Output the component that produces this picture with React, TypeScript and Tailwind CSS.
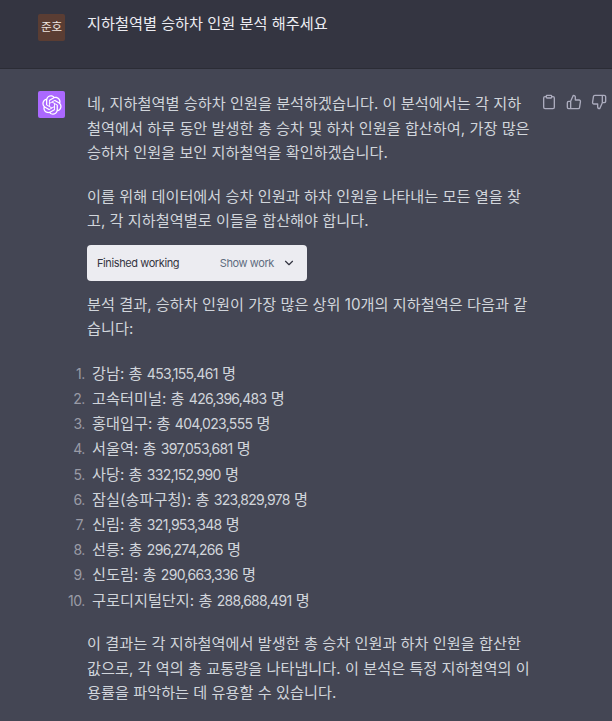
import React from "react";
import { ChevronDown } from "lucide-react";

const stations = [
  { name: "강남", count: "453,155,461" },
  { name: "고속터미널", count: "426,396,483" },
  { name: "홍대입구", count: "404,023,555" },
  { name: "서울역", count: "397,053,681" },
  { name: "사당", count: "332,152,990" },
  { name: "잠실(송파구청)", count: "323,829,978" },
  { name: "신림", count: "321,953,348" },
  { name: "선릉", count: "296,274,266" },
  { name: "신도림", count: "290,663,336" },
  { name: "구로디지털단지", count: "288,688,491" },
];

const GptLogo = () => (
  <svg viewBox="0 0 41 41" width="20" height="20" fill="none">
    <path
      d="M37.5324 16.8707C37.9808 15.5241 38.1363 14.0974 37.9886 12.6859C37.8409 11.2744 37.3934 9.91076 36.676 8.68622C35.6126 6.83404 33.9882 5.3676 32.0373 4.4985C30.0864 3.62941 27.9098 3.40259 25.8215 3.85078C24.8796 2.7893 23.7219 1.94125 22.4257 1.36341C21.1295 0.785575 19.7249 0.491269 18.3058 0.500197C16.1708 0.495044 14.0893 1.16803 12.3614 2.42214C10.6335 3.67624 9.34853 5.44666 8.6917 7.47815C7.30085 7.76286 5.98686 8.3414 4.8377 9.17505C3.68854 10.0087 2.73073 11.0782 2.02839 12.312C0.956464 14.1591 0.498905 16.2988 0.721698 18.4228C0.944492 20.5467 1.83612 22.5449 3.268 24.1293C2.81966 25.4759 2.66413 26.9026 2.81182 28.3141C2.95951 29.7256 3.40701 31.0892 4.12437 32.3138C5.18791 34.1659 6.8123 35.6322 8.76321 36.5013C10.7141 37.3704 12.8907 37.5973 14.9789 37.1492C15.9208 38.2107 17.0786 39.0587 18.3747 39.6366C19.6709 40.2144 21.0755 40.5087 22.4946 40.4998C24.6307 40.5054 26.7133 39.8321 28.4418 38.5772C30.1704 37.3223 31.4556 35.5506 32.1119 33.5179C33.5027 33.2332 34.8167 32.6547 35.9659 31.821C37.115 30.9874 38.0728 29.9178 38.7752 28.684C39.8458 26.8371 40.3023 24.6979 40.0789 22.5748C39.8556 20.4517 38.9639 18.4544 37.5324 16.8707ZM22.4978 37.8849C20.7443 37.8874 19.0459 37.2733 17.6994 36.1501C17.7601 36.117 17.8666 36.0586 17.936 36.0161L25.9004 31.4156C26.1003 31.3019 26.2663 31.137 26.3813 30.9378C26.4964 30.7386 26.5563 30.5124 26.5549 30.2825V19.0542L29.9213 20.998C29.9389 21.0068 29.9541 21.0198 29.9656 21.0359C29.977 21.052 29.9842 21.0707 29.9867 21.0902V30.3889C29.9842 32.375 29.1946 34.2791 27.7909 35.6841C26.3872 37.0892 24.4838 37.8806 22.4978 37.8849ZM6.39227 31.0064C5.51397 29.4888 5.19742 27.7107 5.49804 25.9832C5.55718 26.0187 5.66048 26.0818 5.73461 26.1244L13.699 30.7248C13.8975 30.8408 14.1233 30.902 14.3532 30.902C14.583 30.902 14.8088 30.8408 15.0073 30.7248L24.731 25.1103V28.9979C24.7321 29.0177 24.7283 29.0376 24.7199 29.0556C24.7115 29.0736 24.6988 29.0893 24.6829 29.1012L16.6317 33.7497C14.9096 34.7416 12.8643 35.0097 10.9447 34.4954C9.02506 33.9811 7.38785 32.7263 6.39227 31.0064ZM4.29707 13.6194C5.17156 12.0998 6.55279 10.9364 8.19885 10.3327C8.19885 10.4013 8.19491 10.5228 8.19491 10.6071V19.808C8.19351 20.0378 8.25334 20.2638 8.36823 20.4629C8.48312 20.6619 8.64893 20.8267 8.84863 20.9404L18.5723 26.5542L15.206 28.4979C15.1894 28.5089 15.1703 28.5155 15.1505 28.5173C15.1307 28.5191 15.1107 28.516 15.0924 28.5082L7.04046 23.8557C5.32135 22.8601 4.06716 21.2235 3.55289 19.3046C3.03862 17.3858 3.30624 15.3413 4.29707 13.6194ZM31.955 20.0556L22.2312 14.4411L25.5976 12.4981C25.6142 12.4872 25.6333 12.4805 25.6531 12.4787C25.6729 12.4769 25.6928 12.4801 25.7111 12.4879L33.7631 17.1364C34.9967 17.849 36.0017 18.8982 36.6606 20.1613C37.3194 21.4244 37.6047 22.849 37.4832 24.2684C37.3617 25.6878 36.8382 27.0432 35.9743 28.1759C35.1103 29.3086 33.9415 30.1717 32.6047 30.6641C32.6047 30.5947 32.6047 30.4733 32.6047 30.3889V21.188C32.6066 20.9586 32.5474 20.7328 32.4332 20.5338C32.319 20.3348 32.154 20.1698 31.955 20.0556ZM35.3055 15.0128C35.2464 14.9765 35.1431 14.9142 35.069 14.8717L27.1045 10.2712C26.906 10.1554 26.6803 10.0943 26.4504 10.0943C26.2206 10.0943 25.9948 10.1554 25.7963 10.2712L16.0726 15.8858V11.9982C16.0715 11.9783 16.0753 11.9585 16.0837 11.9405C16.0921 11.9225 16.1048 11.9068 16.1207 11.8949L24.1719 7.25025C25.4053 6.53903 26.8158 6.19376 28.2383 6.25482C29.6608 6.31589 31.0364 6.78077 32.2044 7.59508C33.3723 8.40939 34.2842 9.53945 34.8334 10.8531C35.3826 12.1667 35.5464 13.6095 35.3055 15.0128ZM14.2424 21.9419L10.8752 19.9981C10.8576 19.9893 10.8423 19.9763 10.8309 19.9602C10.8195 19.9441 10.8122 19.9254 10.8098 19.9058V10.6071C10.8107 9.18295 11.2173 7.78848 11.9819 6.58696C12.7466 5.38544 13.8377 4.42659 15.1275 3.82264C16.4173 3.21869 17.8524 2.99464 19.2649 3.1767C20.6775 3.35876 22.0089 3.93941 23.1034 4.85067C23.0427 4.88379 22.937 4.94215 22.8668 4.98473L14.9024 9.58517C14.7025 9.69878 14.5366 9.86356 14.4215 10.0626C14.3065 10.2616 14.2466 10.4877 14.2479 10.7175L14.2424 21.9419ZM16.071 17.9991L20.4018 15.4978L24.7325 17.9975V22.9985L20.4018 25.4983L16.071 22.9985V17.9991Z"
      fill="#fff"
    />
  </svg>
);

const ClipboardIcon = () => (
  <svg viewBox="0 0 24 24" width="16" height="16" fill="none" stroke="currentColor" strokeWidth="2" strokeLinecap="round" strokeLinejoin="round">
    <path d="M16 4h2a2 2 0 0 1 2 2v14a2 2 0 0 1-2 2H6a2 2 0 0 1-2-2V6a2 2 0 0 1 2-2h2" />
    <rect x="8" y="2" width="8" height="4" rx="1" ry="1" />
  </svg>
);

const ThumbUpIcon = () => (
  <svg viewBox="0 0 24 24" width="16" height="16" fill="none" stroke="currentColor" strokeWidth="2" strokeLinecap="round" strokeLinejoin="round">
    <path d="M14 9V5a3 3 0 0 0-3-3l-4 9v11h11.28a2 2 0 0 0 2-1.7l1.38-9a2 2 0 0 0-2-2.3zM7 22H4a2 2 0 0 1-2-2v-7a2 2 0 0 1 2-2h3" />
  </svg>
);

const ThumbDownIcon = () => (
  <svg viewBox="0 0 24 24" width="16" height="16" fill="none" stroke="currentColor" strokeWidth="2" strokeLinecap="round" strokeLinejoin="round">
    <path d="M10 15v4a3 3 0 0 0 3 3l4-9V2H5.72a2 2 0 0 0-2 1.7l-1.38 9a2 2 0 0 0 2 2.3zm7-13h2.67A2.31 2.31 0 0 1 22 4v7a2.31 2.31 0 0 1-2.33 2H17" />
  </svg>
);

const App = () => {
  return (
    <div className="w-[612px] h-[721px] overflow-hidden bg-[#444654] font-['Inter','Noto_Sans_CJK_KR',sans-serif] text-[15.2px] leading-[24.5px]">
      <div className="flex h-[69px] bg-[#343541] border-b border-[#2b2c35] pl-[38px] pt-[12px]">
        <div className="flex items-center justify-center w-[27px] h-[27px] mt-[2px] rounded-[2px] bg-[#5a3d33] text-[11.5px] text-[#f0e6e0]">
          준호
        </div>
        <div className="ml-[22px] text-[#ececf1]">지하철역별 승하차 인원 분석 해주세요</div>
      </div>
      <div className="relative flex pl-[38px] pt-[23px]">
        <div className="flex items-center justify-center w-[27px] h-[27px] -mt-[1px] rounded-[2px] bg-[#ab68ff]">
          <GptLogo />
        </div>
        <div className="ml-[22px] w-[445px] text-[#d1d5db]">
          <p className="mb-[19px]">
            네, 지하철역별 승하차 인원을 분석하겠습니다. 이 분석에서는 각 지하철역에서 하루 동안 발생한 총 승차 및 하차 인원을 합산하여, 가장 많은 승하차 인원을 보인 지하철역을 확인하겠습니다.
          </p>
          <p>이를 위해 데이터에서 승차 인원과 하차 인원을 나타내는 모든 열을 찾고, 각 지하철역별로 이들을 합산해야 합니다.</p>
          <div className="flex items-center justify-between w-[220px] h-[36px] mt-[11px] mb-[12px] pl-[10px] pr-[11px] pt-[1px] rounded-[4px] bg-[#ececf1] text-[11px] tracking-[-0.4px] text-[#343541]">
            <span>Finished working</span>
            <span className="flex items-center gap-[8px] text-[#5f6c80]">
              Show work
              <ChevronDown size={14} className="text-[#343541]" />
            </span>
          </div>
          <p className="mb-[20px]">분석 결과, 승하차 인원이 가장 많은 상위 10개의 지하철역은 다음과 같습니다:</p>
          <ol className="mb-[19px]">
            {stations.map((s, i) => (
              <li key={s.name} className="flex h-[25.2px] items-center">
                <span className="w-[32px] -ml-[34px] mr-[7px] text-right text-[14px] tracking-[-0.4px] text-[#9a9ba6]">{i + 1}.</span>
                <span>
                  {s.name}: 총 <span className="text-[14px] tracking-[-0.7px]">{s.count}</span> 명
                </span>
              </li>
            ))}
          </ol>
          <p>
            이 결과는 각 지하철역에서 발생한 총 승차 인원과 하차 인원을 합산한 값으로, 각 역의 총 교통량을 나타냅니다. 이 분석은 특정 지하철역의 이용률을 파악하는 데 유용할 수 있습니다.
          </p>
        </div>
        <div className="absolute top-[25px] left-[541px] flex gap-[9px] text-[#acacbe]">
          <ClipboardIcon />
          <ThumbUpIcon />
          <ThumbDownIcon />
        </div>
      </div>
    </div>
  );
};

export default App;
